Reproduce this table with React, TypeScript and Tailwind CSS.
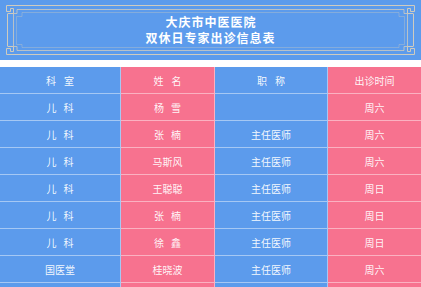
const ROWS: [string, string, string, string][] = [
  ["儿 科", "杨 雪", "", "周六"],
  ["儿 科", "张 楠", "主任医师", "周六"],
  ["儿 科", "马斯风", "主任医师", "周六"],
  ["儿 科", "王聪聪", "主任医师", "周日"],
  ["儿 科", "张 楠", "主任医师", "周日"],
  ["儿 科", "徐 鑫", "主任医师", "周日"],
  ["国医堂", "桂晓波", "主任医师", "周六"],
  ["", "", "", ""],
];

const COLS = ["bg-[#5c9bec]", "bg-[#f7728f]", "bg-[#5c9bec]", "bg-[#f7728f]"];

// 标题外框的回纹装饰
function Frame() {
  const c = "#cfcbbf";
  return (
    <svg
      className="pointer-events-none absolute inset-0"
      width="421"
      height="60"
      viewBox="0 0 421 60"
      fill="none"
    >
      {/* 外框 */}
      <path
        d="M14 5.5H407 M7.5 14V46 M413.5 14V46 M14 54.5H407"
        stroke={c}
        strokeWidth="1"
      />
      {/* 四角回纹 */}
      <path
        d="M14 5.5H6.5V11.5H10.5V8.5H13.5V13.5H7.5 M407 5.5H414.5V11.5H410.5V8.5H407.5V13.5H413.5 M14 54.5H6.5V48.5H10.5V51.5H13.5V46.5H7.5 M407 54.5H414.5V48.5H410.5V51.5H407.5V46.5H413.5"
        stroke={c}
        strokeWidth="1"
      />
      {/* 内框 (阶梯角) */}
      <path
        d="M17 9.5H404V13.5H407.5V17V43H407.5V46.5H404V50.5H17V46.5H13.5V43V17H13.5V13.5H17Z"
        stroke={c}
        strokeOpacity="0.8"
        strokeWidth="1"
      />
      <path
        d="M22 12.5H399V16.5H404.5V44.5H399V47.5H22V44.5H16.5V16.5H22Z"
        stroke={c}
        strokeOpacity="0.35"
        strokeWidth="1"
      />
    </svg>
  );
}

// 两字内容中间留空，用 gap 撑开
function Cell({ text, gap }: { text: string; gap: string }) {
  const parts = text.split(" ");
  return (
    <span className={`flex ${gap}`}>
      {parts.map((p, i) => (
        <span key={i}>{p}</span>
      ))}
    </span>
  );
}

export default function App() {
  return (
    <div
      className="w-[421px] bg-white"
      style={{ fontFamily: '"Noto Sans CJK SC", "Noto Sans", sans-serif' }}
    >
      <div className="relative flex h-[60px] flex-col items-center justify-center bg-[#5c9bec] text-[12px] font-bold leading-[16px] tracking-[1px] text-white">
        <Frame />
        <div className="pl-[1px]">大庆市中医医院</div>
        <div>双休日专家出诊信息表</div>
      </div>

      <div className="mt-[7px] grid grid-cols-[121px_94px_113px_93px] text-[10px] text-white/95">
        {["科 室", "姓 名", "职 称", "出诊时间"].map((h, i) => (
          <div
            key={h}
            className={`flex h-[27px] items-center justify-center border-b border-white/45 ${
              i < 3 ? "border-r" : ""
            } ${COLS[i]}`}
          >
            <Cell text={h} gap="gap-[8px]" />
          </div>
        ))}
        {ROWS.map((row, r) =>
          row.map((cell, i) => (
            <div
              key={`${r}-${i}`}
              className={`flex h-[27px] items-center justify-center border-b border-white/45 ${
                i < 3 ? "border-r" : ""
              } ${COLS[i]}`}
            >
              <Cell text={cell} gap="gap-[7px]" />
            </div>
          )),
        )}
      </div>
    </div>
  );
}
